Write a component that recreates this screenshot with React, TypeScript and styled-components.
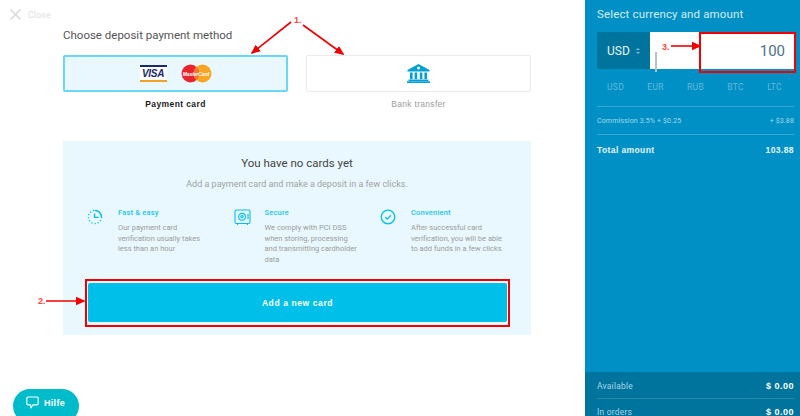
import styled, { createGlobalStyle } from "styled-components";

const features = [
  {
    title: "Fast & easy",
    text: "Our payment card verification usually takes less than an hour",
    icon: "clock",
  },
  {
    title: "Secure",
    text: "We comply with PCI DSS when storing, processing and transmitting cardholder data",
    icon: "safe",
  },
  {
    title: "Convenient",
    text: "After successful card verification, you will be able to add funds in a few clicks",
    icon: "check",
  },
];

const currencies = ["USD", "EUR", "RUB", "BTC", "LTC"];

const FeatureIcon = ({ name }: { name: string }) => {
  if (name === "clock") {
    return (
      <svg width="16" height="16" viewBox="0 0 16 16" fill="none" stroke="#00c0ea">
        <circle cx="8" cy="8" r="6.6" strokeWidth="1.3" strokeDasharray="1.2 2" />
        <path d="M7.6 1.4A6.6 6.6 0 0 1 14.4 8" strokeWidth="1.4" />
        <path d="M7.6 4.5V8.4H11.5" strokeWidth="1.4" />
      </svg>
    );
  }
  if (name === "safe") {
    return (
      <svg width="17" height="17" viewBox="0 0 17 17" fill="none" stroke="#00c0ea" strokeWidth="1.1">
        <rect x="1" y="1" width="15" height="13.5" rx="1.5" />
        <circle cx="8" cy="7.8" r="3.4" />
        <circle cx="8" cy="7.8" r="1.2" />
        <path d="M14 5V10M3.5 14.5V16M13.5 14.5V16" />
      </svg>
    );
  }
  return (
    <svg width="16" height="16" viewBox="0 0 16 16" fill="none" stroke="#00c0ea">
      <circle cx="8" cy="8" r="6.8" strokeWidth="1.3" />
      <path d="M5.2 8.1L7.2 10L10.8 6.4" strokeWidth="1.3" />
    </svg>
  );
};

const BankIcon = () => (
  <svg width="23" height="19" viewBox="0 0 23 19" fill="#009fd4">
    <path d="M11.5 0L22.5 6V7.5H0.5V6Z" />
    <rect x="3" y="8.5" width="2.6" height="6.5" />
    <rect x="7.6" y="8.5" width="2.6" height="6.5" />
    <rect x="12.8" y="8.5" width="2.6" height="6.5" />
    <rect x="17.4" y="8.5" width="2.6" height="6.5" />
    <rect x="1.5" y="15.5" width="20" height="1.6" />
    <rect x="0" y="17.3" width="23" height="1.7" />
    <circle cx="11.5" cy="4" r="1.5" fill="#ffffff" />
  </svg>
);

const MasterCardLogo = () => (
  <McWrap>
    <svg width="31" height="19" viewBox="0 0 31 19">
      <circle cx="9.5" cy="9.5" r="9" fill="#e8242f" />
      <circle cx="21.5" cy="9.5" r="9" fill="#f6a623" />
      <path d="M15.5 2.8a9 9 0 0 1 0 13.4a9 9 0 0 1 0-13.4z" fill="#f2762e" />
    </svg>
    <McText>MasterCard</McText>
  </McWrap>
);

const Annotations = () => (
  <AnnotationLayer width="800" height="416" viewBox="0 0 800 416">
    <defs>
      <marker id="head" markerWidth="6" markerHeight="6" refX="5" refY="3" orient="auto">
        <path d="M0 0.4L6 3L0 5.6Z" fill="#f00000" />
      </marker>
    </defs>
    <g stroke="#f00000" strokeWidth="1.6" fill="none">
      <path d="M291 22L252 53" markerEnd="url(#head)" />
      <path d="M303 25L343 54" markerEnd="url(#head)" />
      <path d="M46 301L84 301" markerEnd="url(#head)" />
      <path d="M671 46L700 46" markerEnd="url(#head)" />
    </g>
    <NoteText x="294" y="23">1.</NoteText>
    <NoteText x="38" y="304">2.</NoteText>
    <NoteText x="662" y="50">3.</NoteText>
  </AnnotationLayer>
);

export default function App() {
  return (
    <Page>
      <GlobalStyle />
      <Main>
        <CloseRow>
          <svg width="11" height="11" viewBox="0 0 11 11" stroke="#d6d8da" strokeWidth="1.5">
            <path d="M0.5 0.5L10.5 10.5M10.5 0.5L0.5 10.5" />
          </svg>
          <CloseLabel>Close</CloseLabel>
        </CloseRow>
        <Heading>Choose deposit payment method</Heading>
        <Methods>
          <Method>
            <MethodCard $active>
              <VisaLogo>
                <VisaText>VISA</VisaText>
              </VisaLogo>
              <MasterCardLogo />
            </MethodCard>
            <MethodLabel $active>Payment card</MethodLabel>
          </Method>
          <Method>
            <MethodCard>
              <BankIcon />
            </MethodCard>
            <MethodLabel>Bank transfer</MethodLabel>
          </Method>
        </Methods>
        <Panel>
          <PanelTitle>You have no cards yet</PanelTitle>
          <PanelSub>Add a payment card and make a deposit in a few clicks.</PanelSub>
          <Features>
            {features.map((feature) => (
              <Feature key={feature.title}>
                <IconSlot>
                  <FeatureIcon name={feature.icon} />
                </IconSlot>
                <div>
                  <FeatureTitle>{feature.title}</FeatureTitle>
                  <FeatureText>{feature.text}</FeatureText>
                </div>
              </Feature>
            ))}
          </Features>
          <ButtonFrame>
            <AddButton>Add a new card</AddButton>
          </ButtonFrame>
        </Panel>
        <HelpButton>
          <svg width="13" height="13" viewBox="0 0 13 13" fill="none" stroke="#ffffff" strokeWidth="1.2">
            <path d="M2 1H11A1.2 1.2 0 0 1 12.2 2.2V7.6A1.2 1.2 0 0 1 11 8.8H7L5 11.6L4.4 8.8H2A1.2 1.2 0 0 1 0.8 7.6V2.2A1.2 1.2 0 0 1 2 1Z" />
          </svg>
          Hilfe
        </HelpButton>
      </Main>
      <Sidebar>
        <SideTop>
          <SideTitle>Select currency and amount</SideTitle>
          <AmountRow>
            <CurrencySelect>
              USD
              <Updown>
                <UpArrow />
                <DownArrow />
              </Updown>
            </CurrencySelect>
            <AmountInput>
              <Caret />
              100
              <AmountFrame />
            </AmountInput>
          </AmountRow>
          <Currencies>
            {currencies.map((c) => (
              <Currency key={c}>{c}</Currency>
            ))}
          </Currencies>
          <CommissionRow>
            <span>Commission 3.5% + $0.25</span>
            <span>+ $3.88</span>
          </CommissionRow>
          <TotalRow>
            <span>Total amount</span>
            <span>103.88</span>
          </TotalRow>
        </SideTop>
        <Balance>
          <BalanceRow>
            <BalanceLabel>Available</BalanceLabel>
            <BalanceValue>$ 0.00</BalanceValue>
          </BalanceRow>
          <BalanceRow>
            <BalanceLabel>In orders</BalanceLabel>
            <BalanceValue>$ 0.00</BalanceValue>
          </BalanceRow>
        </Balance>
      </Sidebar>
      <Annotations />
    </Page>
  );
}

/*
Styles
*/

const GlobalStyle = createGlobalStyle`
  html, body {
    margin: 0;
    padding: 0;
    background: #ffffff;
    font-family: Roboto, "Liberation Sans", Arial, sans-serif;
  }
`;

const Page = styled.div`
  position: relative;
  display: flex;
  width: 800px;
  height: 416px;
  overflow: hidden;
`;

const Main = styled.main`
  position: relative;
  flex: 0 0 585px;
  padding: 9px 54px 0 10px;
  box-sizing: border-box;
`;

const CloseRow = styled.div`
  display: flex;
  align-items: center;
  gap: 7px;
  height: 11px;
`;

const CloseLabel = styled.span`
  font-size: 8.5px;
  letter-spacing: 0.3px;
  color: #dcdee0;
`;

const Heading = styled.h1`
  margin: 8px 0 0 53px;
  font-size: 11.5px;
  line-height: 15px;
  font-weight: 400;
  color: #555555;
`;

const Methods = styled.div`
  display: flex;
  gap: 18px;
  margin: 12px 0 0 53px;
`;

const Method = styled.div`
  flex: 0 0 225px;
`;

const MethodCard = styled.div<{ $active?: boolean }>`
  display: flex;
  align-items: center;
  justify-content: center;
  gap: 14px;
  height: 37px;
  box-sizing: border-box;
  border: ${(p) => (p.$active ? "2px solid #6ad8f5" : "1px solid #e9eaeb")};
  border-radius: 2px;
  background: ${(p) => (p.$active ? "#e9f8fe" : "#ffffff")};
`;

const MethodLabel = styled.div<{ $active?: boolean }>`
  margin-top: 7px;
  text-align: center;
  font-family: "Liberation Sans", Arial, sans-serif;
  font-size: 8.5px;
  line-height: 11px;
  letter-spacing: ${(p) => (p.$active ? "0.4px" : "0.3px")};
  font-weight: ${(p) => (p.$active ? 700 : 400)};
  color: ${(p) => (p.$active ? "#1c1c1c" : "#9c9c9c")};
`;

const VisaLogo = styled.div`
  display: flex;
  align-items: center;
  justify-content: center;
  width: 27px;
  height: 17px;
  box-sizing: border-box;
  border-top: 2px solid #1a2a6c;
  border-bottom: 2px solid #f0a12a;
  background: #ffffff;
`;

const VisaText = styled.span`
  font-family: "Liberation Sans", Arial, sans-serif;
  font-size: 10px;
  line-height: 10px;
  font-weight: 700;
  font-style: italic;
  letter-spacing: -0.3px;
  color: #1a2a6c;
`;

const McWrap = styled.div`
  position: relative;
  width: 31px;
  height: 19px;
  line-height: 0;
`;

const McText = styled.span`
  position: absolute;
  left: 0;
  right: 0;
  top: 7px;
  text-align: center;
  font-family: "Liberation Sans", Arial, sans-serif;
  font-size: 5px;
  line-height: 6px;
  font-weight: 700;
  font-style: italic;
  letter-spacing: -0.1px;
  color: #ffffff;
`;

const Panel = styled.section`
  display: flex;
  flex-direction: column;
  height: 194px;
  box-sizing: border-box;
  margin: 31px 0 0 53px;
  padding-top: 15px;
  background: #e9f8fe;
`;

const PanelTitle = styled.h2`
  margin: 0;
  text-align: center;
  font-size: 11.5px;
  line-height: 15px;
  font-weight: 400;
  color: #444444;
`;

const PanelSub = styled.p`
  margin: 8px 0 0;
  text-align: center;
  font-size: 9px;
  line-height: 11px;
  color: #a0a2a3;
`;

const Features = styled.div`
  display: flex;
  margin: 18px 0 0 24px;
  height: 71px;
`;

const Feature = styled.div`
  display: flex;
  flex: 0 0 146.5px;
`;

const IconSlot = styled.div`
  flex: 0 0 31px;
  line-height: 0;
  padding-top: 1px;
`;

const FeatureTitle = styled.div`
  font-size: 7.5px;
  line-height: 10px;
  letter-spacing: 0.2px;
  font-weight: 500;
  color: #19c4ee;
`;

const FeatureText = styled.p`
  margin: 5px 0 0;
  width: 96px;
  font-size: 7.5px;
  line-height: 10.5px;
  color: #9a9c9d;
`;

const ButtonFrame = styled.div`
  margin: 0 21px 0 22px;
  padding: 2px 1px 3px;
  border: 2px solid #f00000;
  height: 48px;
  box-sizing: border-box;
`;

const AddButton = styled.button`
  display: block;
  width: 100%;
  height: 100%;
  padding: 1px 0 0;
  border: 0;
  border-radius: 2px;
  background: #00c0ea;
  color: #ffffff;
  font-family: "Liberation Sans", Arial, sans-serif;
  font-size: 8.5px;
  font-weight: 700;
  letter-spacing: 0.6px;
`;

const HelpButton = styled.button`
  position: absolute;
  left: 13px;
  top: 389px;
  display: flex;
  align-items: center;
  gap: 5px;
  width: 66px;
  height: 34px;
  padding: 0 0 7px 13px;
  box-sizing: border-box;
  border: 0;
  border-radius: 17px;
  background: #00bccb;
  color: #ffffff;
  font-family: "Liberation Sans", Arial, sans-serif;
  font-size: 9px;
  font-weight: 700;
  letter-spacing: 0.3px;
`;

const Sidebar = styled.aside`
  flex: 0 0 215px;
  display: flex;
  flex-direction: column;
  background: #0090c5;
  color: #ffffff;
`;

const SideTop = styled.div`
  flex: 1;
  padding: 7px 6px 0 12px;
`;

const SideTitle = styled.h2`
  margin: 0;
  font-size: 11.5px;
  line-height: 14px;
  font-weight: 400;
  letter-spacing: 0.15px;
  color: #d5eef8;
`;

const AmountRow = styled.div`
  display: flex;
  height: 37px;
  margin: 11px -1px 0 0;
`;

const CurrencySelect = styled.div`
  flex: 0 0 53px;
  display: flex;
  align-items: center;
  gap: 6px;
  padding-left: 10px;
  box-sizing: border-box;
  background: #00749d;
  border-radius: 2px 0 0 2px;
  font-size: 12px;
  color: #e6f5fb;
`;

const Updown = styled.span`
  display: flex;
  flex-direction: column;
  gap: 2px;
`;

const UpArrow = styled.i`
  display: block;
  width: 0;
  height: 0;
  border-left: 2px solid transparent;
  border-right: 2px solid transparent;
  border-bottom: 2px solid #7fbdd5;
`;

const DownArrow = styled(UpArrow)`
  border-bottom: 0;
  border-top: 2px solid #7fbdd5;
`;

const AmountInput = styled.div`
  position: relative;
  flex: 1;
  display: flex;
  align-items: center;
  justify-content: flex-end;
  padding-right: 10px;
  background: #ffffff;
  font-size: 15px;
  color: #4a7388;
`;

const Caret = styled.span`
  position: absolute;
  left: 5px;
  top: 20px;
  width: 2px;
  height: 20px;
  background: #b6c2c9;
`;

const AmountFrame = styled.span`
  position: absolute;
  left: 49px;
  right: -1px;
  top: 0;
  bottom: -4px;
  border: 2px solid #f00000;
`;

const Currencies = styled.div`
  display: flex;
  justify-content: space-between;
  height: 38px;
  padding: 13px 12px 0 10px;
  box-sizing: border-box;
  border-bottom: 1px solid rgba(255, 255, 255, 0.22);
`;

const Currency = styled.span`
  font-size: 8.5px;
  line-height: 10px;
  letter-spacing: 0.3px;
  color: #62bbdd;
`;

const CommissionRow = styled.div`
  display: flex;
  justify-content: space-between;
  align-items: center;
  height: 28px;
  box-sizing: border-box;
  border-bottom: 1px solid rgba(255, 255, 255, 0.22);
  font-size: 7px;
  letter-spacing: 0.15px;
  color: #a5dbef;
`;

const TotalRow = styled.div`
  display: flex;
  justify-content: space-between;
  align-items: center;
  height: 29px;
  font-family: "Liberation Sans", Arial, sans-serif;
  font-size: 8.5px;
  font-weight: 700;
  letter-spacing: 0.4px;
  color: #e9f7fc;
`;

const Balance = styled.div`
  flex: 0 0 44px;
  min-height: 0;
  overflow: hidden;
  padding: 1px 6px 0 12px;
  box-sizing: border-box;
  background: #00749d;
`;

const BalanceRow = styled.div`
  display: flex;
  justify-content: space-between;
  align-items: center;
  height: 26px;
  flex: none;
  box-sizing: border-box;
  border-bottom: 1px solid rgba(255, 255, 255, 0.16);
`;

const BalanceLabel = styled.span`
  font-size: 8.5px;
  letter-spacing: 0.2px;
  color: #a5d6e8;
`;

const BalanceValue = styled.span`
  font-family: "Liberation Sans", Arial, sans-serif;
  font-size: 9px;
  font-weight: 700;
  letter-spacing: 0.5px;
`;

const AnnotationLayer = styled.svg`
  position: absolute;
  left: 0;
  top: 0;
  pointer-events: none;
`;

const NoteText = styled.text`
  font-family: "Liberation Sans", sans-serif;
  font-size: 9px;
  font-weight: 700;
  fill: #f44;
`;
